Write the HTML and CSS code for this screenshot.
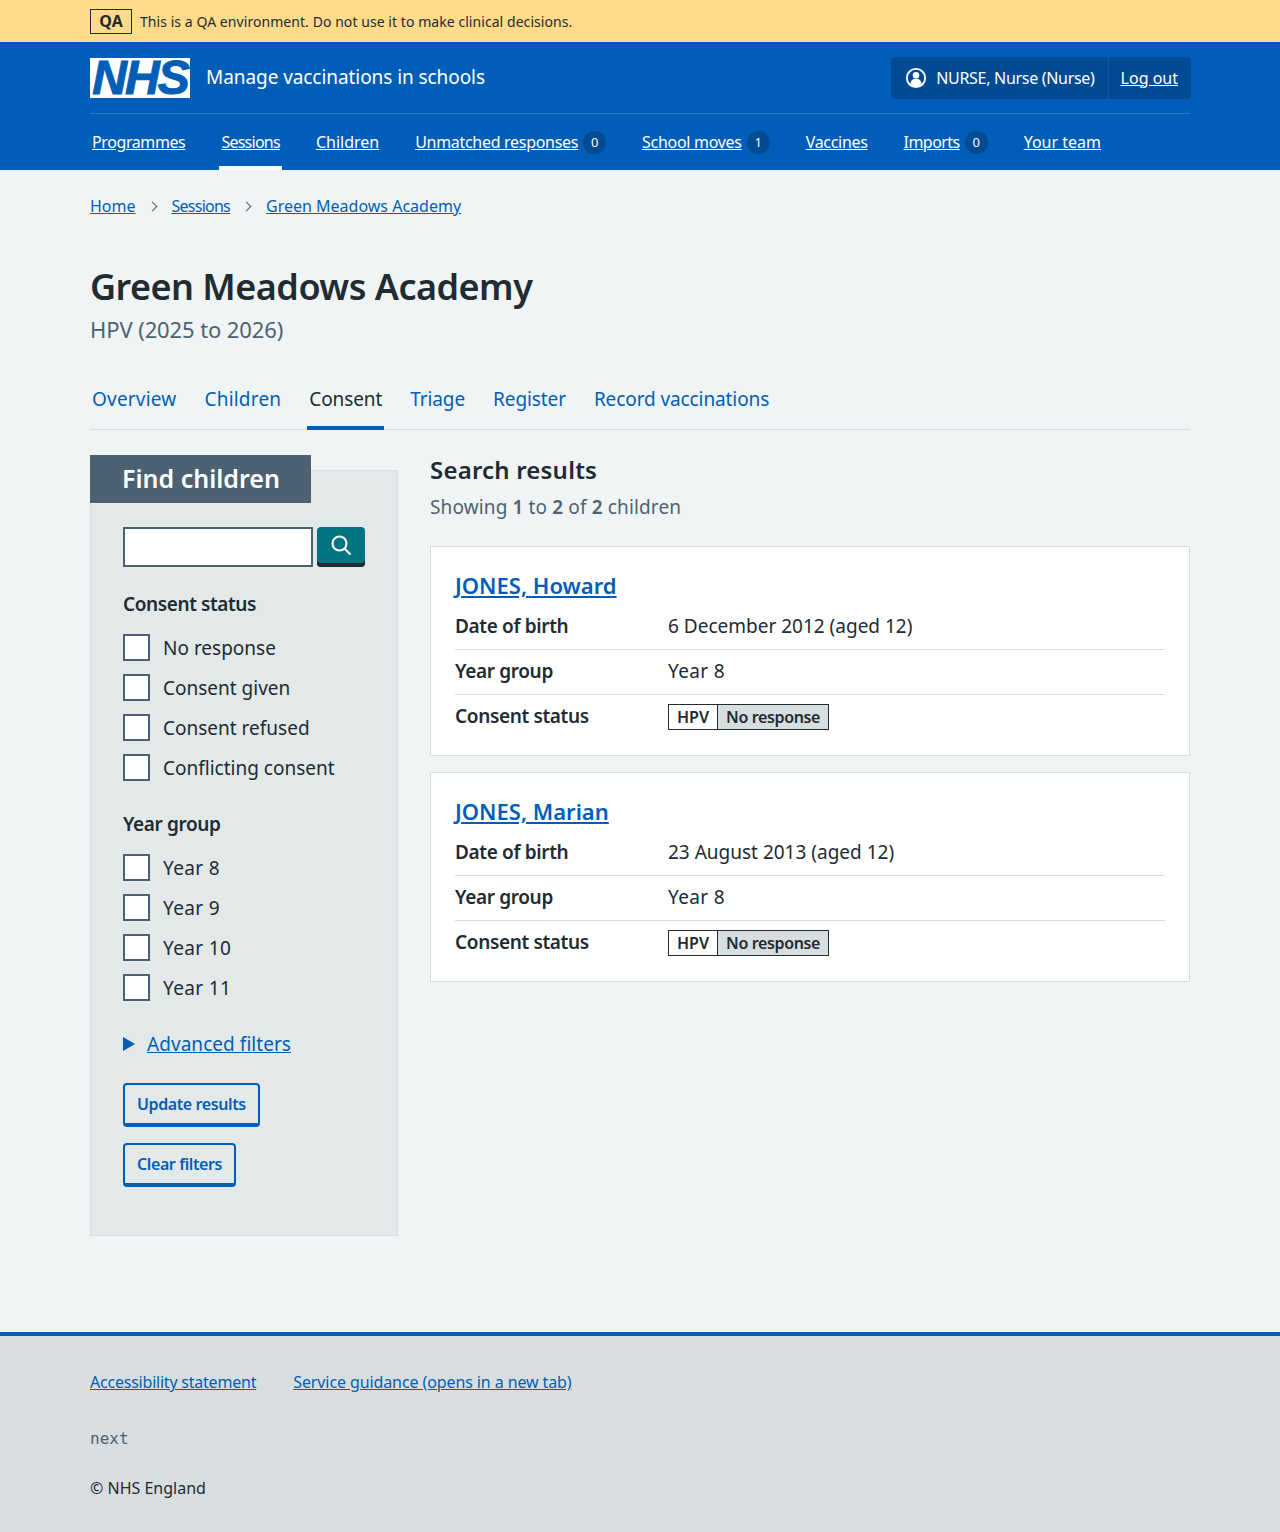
FILE: index.html
```html
<!DOCTYPE html>
<html lang="en">
  <head>
    <meta charset="UTF-8" />
    <meta name="viewport" content="width=device-width, initial-scale=1.0" />
    <title>Green Meadows Academy</title>
    <link rel="stylesheet" href="styles.css">
  </head>
  <body>
    <div class="env-banner">
      <div class="wrap env-row">
        <strong class="env-tag">QA</strong>
        <span>This is a QA environment. Do not use it to make clinical decisions.</span>
      </div>
    </div>

    <header class="header">
      <div class="wrap">
        <div class="header-top">
          <a class="logo" href="#">NHS</a>
          <span class="service-name">Manage vaccinations in schools</span>
          <div class="account">
            <div class="account-user">
              <svg class="account-icon" viewBox="0 0 24 24" width="22" height="22" aria-hidden="true">
                <circle cx="12" cy="12" r="10" fill="none" stroke="#fff" stroke-width="2" />
                <circle cx="12" cy="9" r="3.6" fill="#fff" />
                <path d="M5.8 19.2c0-4.3 2.6-6.3 6.2-6.3s6.2 2 6.2 6.3c-1.7 1.5-3.9 2.4-6.2 2.4s-4.5-.9-6.2-2.4z" fill="#fff" />
              </svg>
              NURSE, Nurse (Nurse)
            </div>
            <a class="account-logout" href="#">Log out</a>
          </div>
        </div>
        <nav class="nav">
          <a class="nav-link nav-first" href="#">Programmes</a>
          <a class="nav-link nav-current nav-tight" href="#">Sessions</a>
          <a class="nav-link nav-plain" href="#">Children</a>
          <span class="nav-item"><a class="nav-link" href="#">Unmatched responses</a><span class="count">0</span></span>
          <span class="nav-item"><a class="nav-link" href="#">School moves</a><span class="count">1</span></span>
          <a class="nav-link" href="#">Vaccines</a>
          <span class="nav-item"><a class="nav-link nav-imports" href="#">Imports</a><span class="count">0</span></span>
          <a class="nav-link nav-plain" href="#">Your team</a>
        </nav>
      </div>
    </header>

    <div class="wrap">
      <ol class="breadcrumb">
        <li><a href="#">Home</a></li>
        <li class="crumb-sep"></li>
        <li><a class="nav-tight" href="#">Sessions</a></li>
        <li class="crumb-sep"></li>
        <li><a href="#">Green Meadows Academy</a></li>
      </ol>

      <h1 class="page-title">Green Meadows Academy</h1>
      <p class="page-caption">HPV (2025 to 2026)</p>

      <div class="tabs">
        <a class="tab tab-wide" href="#">Overview</a>
        <a class="tab tab-wide" href="#">Children</a>
        <a class="tab tab-current" href="#">Consent</a>
        <a class="tab" href="#">Triage</a>
        <a class="tab" href="#">Register</a>
        <a class="tab" href="#">Record vaccinations</a>
      </div>

      <div class="columns">
        <aside class="filters">
          <h2 class="filters-heading">Find children</h2>
          <div class="filters-body">
            <div class="search">
              <input class="search-input" type="text" />
              <button class="search-btn" aria-label="Search">
                <svg viewBox="0 0 24 24" width="24" height="24" aria-hidden="true">
                  <circle cx="10.5" cy="10.5" r="7" fill="none" stroke="#fff" stroke-width="2" />
                  <path d="M15.7 15.7l5.3 5.3" fill="none" stroke="#fff" stroke-width="2" stroke-linecap="round" />
                </svg>
              </button>
            </div>

            <div class="filter-label">Consent status</div>
            <label class="check"><input type="checkbox" /><span>No response</span></label>
            <label class="check"><input type="checkbox" /><span>Consent given</span></label>
            <label class="check"><input type="checkbox" /><span>Consent refused</span></label>
            <label class="check"><input type="checkbox" /><span>Conflicting consent</span></label>

            <div class="filter-label filter-label-second">Year group</div>
            <label class="check"><input type="checkbox" /><span class="year">Year 8</span></label>
            <label class="check"><input type="checkbox" /><span class="year">Year 9</span></label>
            <label class="check"><input type="checkbox" /><span class="year">Year 10</span></label>
            <label class="check"><input type="checkbox" /><span class="year">Year 11</span></label>

            <div class="advanced"><span class="advanced-arrow"></span><a href="#">Advanced filters</a></div>

            <a class="btn-secondary" href="#">Update results</a>
            <a class="btn-secondary" href="#">Clear filters</a>
          </div>
        </aside>

        <main class="results">
          <h2 class="results-title">Search results</h2>
          <p class="results-count">Showing <b>1</b> to <b>2</b> of <b>2</b> children</p>

          <section class="card">
            <h3 class="card-title"><a href="#">JONES, Howard</a></h3>
            <div class="row"><div class="row-key">Date of birth</div><div>6 December 2012 (aged 12)</div></div>
            <div class="row"><div class="row-key">Year group</div><div class="year">Year 8</div></div>
            <div class="row row-last"><div class="row-key">Consent status</div><div class="status"><span class="status-name">HPV</span><span class="status-value">No response</span></div></div>
          </section>

          <section class="card">
            <h3 class="card-title"><a href="#">JONES, Marian</a></h3>
            <div class="row"><div class="row-key">Date of birth</div><div>23 August 2013 (aged 12)</div></div>
            <div class="row"><div class="row-key">Year group</div><div class="year">Year 8</div></div>
            <div class="row row-last"><div class="row-key">Consent status</div><div class="status"><span class="status-name">HPV</span><span class="status-value">No response</span></div></div>
          </section>
        </main>
      </div>
    </div>

    <footer class="footer">
      <div class="wrap">
        <div class="footer-links">
          <a class="footer-first" href="#">Accessibility statement</a>
          <a href="#">Service guidance (opens in a new tab)</a>
        </div>
        <div class="footer-version">next</div>
        <div class="footer-copy">© NHS England</div>
      </div>
    </footer>
  </body>
</html>
```

FILE: styles.css
```css
* {
  box-sizing: border-box;
}
body {
  margin: 0;
  font-family: "Noto Sans", Arial, sans-serif;
  font-size: 19px;
  line-height: 28px;
  color: #212b32;
  background-color: #f0f4f5;
}
a {
  color: #005eb8;
}
.wrap {
  width: 1100px;
  margin-left: 90px;
}

/* environment banner */
.env-banner {
  height: 42px;
  background: #ffdb8a;
  font-size: 14px;
  letter-spacing: 0.06px;
}
.env-row {
  display: flex;
  align-items: center;
  height: 42px;
  padding-top: 1px;
}
.env-tag {
  width: 42px;
  height: 25px;
  margin-right: 8px;
  border: 1px solid #212b32;
  text-align: center;
  font-size: 16px;
  line-height: 23px;
}

/* header */
.header {
  height: 128px;
  background: #005eb8;
  color: white;
}
.header a {
  color: white;
}
.header-top {
  display: flex;
  align-items: center;
  height: 72px;
  border-bottom: 1px solid #2a78c4;
}
.logo {
  width: 100px;
  height: 40px;
  margin-right: 16px;
  background: white;
  text-align: center;
  text-decoration: none;
  font-family: "Liberation Sans", Arial, sans-serif;
  font-size: 48px;
  font-weight: bold;
  font-style: italic;
  line-height: 40px;
  letter-spacing: -2px;
  -webkit-text-stroke: 1px #005eb8;
}
.header .logo {
  color: #005eb8;
}
.service-name {
  margin-top: -2px;
  font-size: 19px;
  letter-spacing: -0.07px;
}
.account {
  display: flex;
  align-items: center;
  height: 42px;
  margin-left: auto;
  margin-right: -1px;
  background: #004b93;
  border-radius: 4px;
  font-size: 16px;
}
.account-user {
  display: flex;
  align-items: center;
  height: 42px;
  padding: 0 13px 0 14px;
  border-right: 1px solid #0b5aa8;
  letter-spacing: -0.3px;
}
.account-icon {
  margin-right: 9px;
}
.account-logout {
  padding: 0 13px 0 12px;
}
.nav {
  display: flex;
  gap: 36px;
  padding-left: 2px;
  font-size: 16px;
  letter-spacing: -0.3px;
}
.nav-item {
  display: flex;
  align-items: center;
  height: 56px;
}
.nav-link {
  display: block;
  height: 56px;
  line-height: 56px;
}
.nav-first {
  letter-spacing: -0.4px;
}
.nav-tight {
  letter-spacing: -0.75px;
}
.nav-imports {
  letter-spacing: -0.55px;
}
.nav-plain {
  letter-spacing: 0;
}
.nav-current {
  border-bottom: 4px solid white;
  margin: 0 -2px;
  padding: 0 2px;
}
.count {
  width: 23px;
  height: 23px;
  margin-left: 5px;
  background: #004b93;
  border-radius: 50%;
  text-align: center;
  font-size: 13px;
  line-height: 23px;
  letter-spacing: 0;
}

/* breadcrumb */
.breadcrumb {
  display: flex;
  align-items: center;
  height: 72px;
  margin: 0;
  padding: 0;
  list-style: none;
  font-size: 16px;
}
.crumb-sep {
  width: 7px;
  height: 7px;
  margin: 0 16px 0 13px;
  border-top: 1.5px solid #4c6272;
  border-right: 1.5px solid #4c6272;
  transform: rotate(45deg);
}

.page-title {
  margin: 24px 0 0;
  font-size: 36px;
  line-height: 42px;
  font-weight: 600;
  letter-spacing: -0.52px;
}
.page-caption {
  margin: 5px 0 0;
  color: #4c6272;
  font-size: 22px;
  line-height: 32px;
  letter-spacing: -0.1px;
}

/* tabs */
.tabs {
  display: flex;
  gap: 24px;
  height: 59px;
  margin-top: 26px;
  border-bottom: 1px solid #d8dde0;
}
.tab {
  height: 59px;
  padding: 0 2px;
  line-height: 56px;
  letter-spacing: -0.1px;
  text-decoration: none;
}
.tab-wide {
  letter-spacing: 0.2px;
}
.tab-current {
  color: #212b32;
  border-bottom: 4px solid #005eb8;
}

.columns {
  display: flex;
  gap: 32px;
  margin-top: 25px;
}

/* filter panel */
.filters {
  flex: none;
  width: 308px;
}
.filters-heading {
  position: relative;
  width: 221px;
  height: 48px;
  margin: 0;
  padding-left: 32px;
  background: #4c6272;
  color: white;
  font-size: 25px;
  line-height: 46px;
  font-weight: 600;
}
.filters-body {
  height: 766px;
  margin-top: -33px;
  padding: 56px 32px 0;
  background: #e3e8e9;
  border: 1px solid #d8dde0;
}
.search {
  display: flex;
  gap: 4px;
}
.search-input {
  width: 190px;
  height: 40px;
  border: 2px solid #4c6272;
  background: white;
}
.search-btn {
  display: flex;
  align-items: center;
  justify-content: center;
  width: 48px;
  height: 40px;
  padding: 0 0 4px;
  border: none;
  background: #007580;
  border-radius: 4px;
  box-shadow: inset 0 -4px 0 #212b32;
}
.filter-label {
  margin-top: 23px;
  margin-bottom: 16px;
  font-weight: 600;
  font-size: 19px;
  letter-spacing: -0.4px;
}
.filter-label-second {
  margin-top: 28px;
}
.check {
  display: flex;
  gap: 13px;
  height: 28px;
  margin-bottom: 12px;
}
.check input {
  appearance: none;
  flex: none;
  width: 27px;
  height: 27px;
  margin: 0;
  background: white;
  border: 2px solid #4c6272;
}
.year {
  letter-spacing: 0.35px;
}
.advanced {
  display: flex;
  align-items: center;
  margin-top: 28px;
  margin-bottom: 25px;
}
.advanced-arrow {
  width: 0;
  height: 0;
  margin-right: 12px;
  border-left: 12px solid #005eb8;
  border-top: 7px solid transparent;
  border-bottom: 7px solid transparent;
}
.advanced a {
  letter-spacing: 0.05px;
}
.btn-secondary {
  display: table;
  height: 44px;
  margin-bottom: 16px;
  padding: 0 12px;
  border: 2px solid #005eb8;
  border-bottom-width: 4px;
  border-radius: 4px;
  font-size: 16px;
  font-weight: 600;
  line-height: 38px;
  letter-spacing: -0.4px;
  text-decoration: none;
}

/* results */
.results {
  flex: 1;
}
.results-title {
  margin: 0;
  font-size: 24px;
  line-height: 30px;
  font-weight: 600;
  letter-spacing: 0.2px;
}
.results-count {
  margin: 8px 0 25px;
  color: #4c6272;
  letter-spacing: 0.13px;
}
.results-count b {
  font-weight: 600;
}
.card {
  height: 210px;
  margin-bottom: 16px;
  padding: 22px 24px 0;
  background: white;
  border: 1px solid #d8dde0;
}
.card-title {
  height: 36px;
  margin: 0;
  font-size: 22px;
  line-height: 32px;
  font-weight: 600;
}
.row {
  display: flex;
  height: 45px;
  padding-top: 7px;
  border-bottom: 1px solid #d8dde0;
}
.row-last {
  border-bottom: none;
}
.row-key {
  width: 213px;
  font-weight: 600;
  letter-spacing: -0.35px;
}
.status {
  display: flex;
  height: 26px;
  margin-top: 2px;
  border: 1px solid #212b32;
  font-size: 16px;
  line-height: 24px;
  font-weight: 600;
}
.status-name {
  padding: 0 8px;
  background: white;
  border-right: 1px solid #212b32;
}
.status-value {
  padding: 0 8px;
  background: #d8dde0;
  letter-spacing: -0.35px;
}

/* footer */
.footer {
  height: 200px;
  margin-top: 96px;
  padding-top: 32px;
  background: #d8dde0;
  border-top: 4px solid #005eb8;
  font-size: 16px;
}
.footer-links {
  display: flex;
  gap: 37px;
  letter-spacing: -0.1px;
}
.footer-first {
  letter-spacing: -0.22px;
}
.footer-version {
  margin-top: 29px;
  color: #4c6272;
  font-family: "DejaVu Sans Mono", monospace;
  font-size: 16px;
  letter-spacing: 0;
}
.footer-copy {
  margin-top: 21px;
}
```
